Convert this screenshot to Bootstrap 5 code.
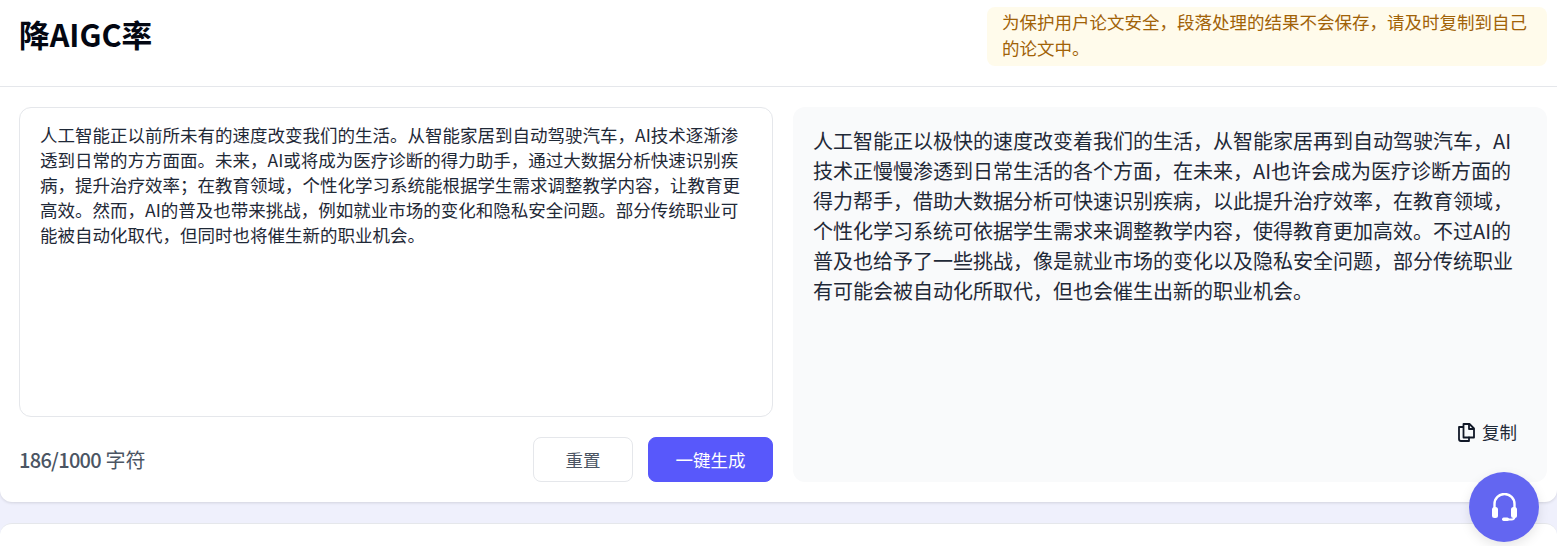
<!DOCTYPE html>
<html lang="zh-CN">
<head>
<meta charset="utf-8">
<title>降AIGC率</title>
<link href="https://cdn.jsdelivr.net/npm/bootstrap@5.3.0/dist/css/bootstrap.min.css" rel="stylesheet">
<style>
html,body{height:546px;overflow:hidden}
body{background:#eff0fc;font-family:"Microsoft YaHei","Noto Sans CJK SC",sans-serif;color:#111827}
.tool-panel{background:#fff;height:502px;border-radius:0 0 12px 12px;box-shadow:0 1px 3px rgba(0,0,0,.12)}
.tool-head{height:87px;padding:7px 10px 0 19px;border-bottom:1px solid #e5e7eb}
.tool-title{font-size:30.700px;line-height:42px;font-weight:700;margin:6px 0 0;color:#030712}
.tip-box{width:560px;height:59px;background:#fffbeb;color:#a16207;border-radius:8px;padding:2px 15px 0;font-size:17.500px;line-height:26px}
.tool-body{padding:20px 10px 0 19px;gap:20px}
.pane{width:754px}
.input-box{height:310px;border:1px solid #e5e7eb;border-radius:12px;padding:14px 20px;font-size:17.500px;line-height:25px;color:#1f2937}
.count-text{font-size:20px;color:#4b5563}
.count-text b{font-weight:500;letter-spacing:-.7px}
.btn-reset,.btn-make{height:45px;font-size:17.500px;border-radius:8px;padding:0;line-height:43px}
.btn-reset{width:100px;margin-right:15px;background:#fff;border:1px solid #e5e7eb;color:#4b5563}
.btn-make{width:125px;background:#5858fb;border:1px solid #5858fb;color:#fff}
.output-box{height:375px;background:#f9fafb;border-radius:12px;padding:19px 20px 19px;font-size:20px;line-height:30px;color:#1f2937}
.copy-link{font-size:17.500px;color:#1f2937;line-height:24px;margin-right:10px;margin-bottom:19px;gap:7px}
.next-panel{background:#fff;height:40px;margin-top:21px;border-top:1px solid #e5e7eb;border-radius:12px 12px 0 0}
.help-fab{position:fixed;left:1469px;top:472px;width:70px;height:70px;border-radius:50%;background:#6366f1;box-shadow:0 4px 12px rgba(0,0,0,.1)}
</style>
</head>
<body>
<div class="tool-panel">
  <div class="tool-head d-flex justify-content-between align-items-start">
    <h1 class="tool-title">降AIGC率</h1>
    <div class="tip-box">为保护用户论文安全，段落处理的结果不会保存，请及时复制到自己的论文中。</div>
  </div>
  <div class="tool-body d-flex">
    <div class="pane">
      <div class="input-box">人工智能正以前所未有的速度改变我们的生活。从智能家居到自动驾驶汽车，AI技术逐渐渗透到日常的方方面面。未来，AI或将成为医疗诊断的得力助手，通过大数据分析快速识别疾病，提升治疗效率；在教育领域，个性化学习系统能根据学生需求调整教学内容，让教育更高效。然而，AI的普及也带来挑战，例如就业市场的变化和隐私安全问题。部分传统职业可能被自动化取代，但同时也将催生新的职业机会。</div>
      <div class="d-flex justify-content-between align-items-center mt-3 pt-1">
        <div class="count-text"><b>186/1000</b> 字符</div>
        <div class="d-flex">
          <button class="btn btn-reset" type="button">重置</button>
          <button class="btn btn-make" type="button">一键生成</button>
        </div>
      </div>
    </div>
    <div class="pane output-box d-flex flex-column justify-content-between">
      <div>人工智能正以极快的速度改变着我们的生活，从智能家居再到自动驾驶汽车，AI技术正慢慢渗透到日常生活的各个方面，在未来，AI也许会成为医疗诊断方面的得力帮手，借助大数据分析可快速识别疾病，以此提升治疗效率，在教育领域，个性化学习系统可依据学生需求来调整教学内容，使得教育更加高效。不过AI的普及也给予了一些挑战，像是就业市场的变化以及隐私安全问题，部分传统职业有可能会被自动化所取代，但也会催生出新的职业机会。</div>
      <div class="d-flex justify-content-end align-items-center copy-link">
        <svg width="17" height="19" viewBox="0 0 17 19" fill="none" stroke="#111827" stroke-width="1.800" stroke-linejoin="round" stroke-linecap="round"><path d="M5.500 1h6L16 5.500V14.500H5.500z"/><path d="M11 1.500V6H15.500"/><path d="M5 4H1v12a2 2 0 0 0 2 2h8v-3.500"/></svg>
        <span>复制</span>
      </div>
    </div>
  </div>
</div>
<div class="next-panel"></div>
<div class="help-fab d-flex align-items-center justify-content-center">
  <svg width="25" height="28" viewBox="0 0 25 28" fill="none"><path d="M2.500 16V11a10 10 0 0 1 20 0V16" stroke="#fff" stroke-width="2.400"/><rect x="0" y="14" width="6" height="11" rx="2.500" fill="#fff"/><rect x="19" y="14" width="6" height="11" rx="2.500" fill="#fff"/><path d="M22.500 24c0 1.800-1.200 2.500-3 2.500H14" stroke="#fff" stroke-width="1.800"/><rect x="10" y="24.500" width="7" height="3.500" rx="1.700" fill="#fff"/></svg>
</div>
</body>
</html>
